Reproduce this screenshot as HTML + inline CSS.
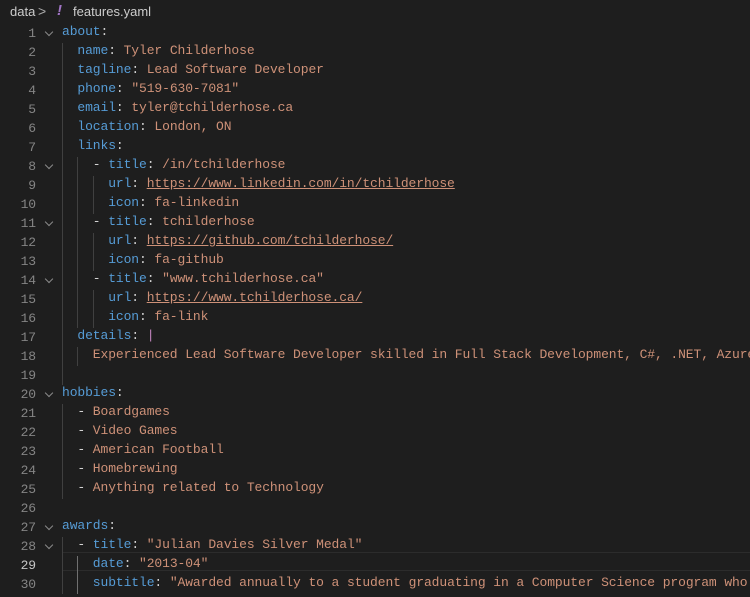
<!DOCTYPE html>
<html><head><meta charset="utf-8"><style>
html,body{margin:0;padding:0;background:#1e1e1e;width:750px;height:597px;overflow:hidden}
#bc{position:absolute;top:0;left:0;height:22px;width:750px;font:13px "Liberation Sans",sans-serif;color:#cccccc}
#bc span{position:absolute;top:4px}
#wrap{position:absolute;left:0;top:0;width:750px;height:597px;overflow:hidden}
.ln{position:absolute;left:0;width:36px;text-align:right;color:#858585;font:13px "Liberation Mono",monospace;letter-spacing:-0.1px}
.row{position:absolute;left:62px;width:688px;overflow:hidden;height:19px;line-height:19px;font:13px "Liberation Mono",monospace;letter-spacing:-0.1px;color:#d4d4d4;white-space:pre}
.g{position:absolute;top:0;width:1px;height:19px;background:#404040}
.k{color:#569cd6}.s{color:#ce9178}.u{color:#ce9178;text-decoration:underline}.p{color:#c586c0}
.cv{position:absolute;left:46px;width:5px;height:5px;border-right:1px solid #8a8a8a;border-bottom:1px solid #8a8a8a;transform:rotate(45deg)}
#cur{position:absolute;left:62px;width:700px;top:552px;height:17px;border:1px solid #2c2c2c}
</style></head><body>
<div id="bc"><span style="left:10px">data</span><span style="left:38px;top:3px;font-size:14px;color:#aaa">&gt;</span><span style="left:57px;top:2px;color:#a074c4;font-weight:bold;font-style:italic;font-size:15px">!</span><span style="left:73px">features.yaml</span></div>
<div id="wrap"><div id="cur"></div><div id="ed"></div></div>
<script>
const L=[
[0,'<span class="k">about</span>:'],
[2,'<span class="k">name</span>: <span class="s">Tyler Childerhose</span>'],
[2,'<span class="k">tagline</span>: <span class="s">Lead Software Developer</span>'],
[2,'<span class="k">phone</span>: <span class="s">"519-630-7081"</span>'],
[2,'<span class="k">email</span>: <span class="s">tyler@tchilderhose.ca</span>'],
[2,'<span class="k">location</span>: <span class="s">London, ON</span>'],
[2,'<span class="k">links</span>:'],
[4,'- <span class="k">title</span>: <span class="s">/in/tchilderhose</span>'],
[6,'<span class="k">url</span>: <span class="u">https://www.linkedin.com/in/tchilderhose</span>'],
[6,'<span class="k">icon</span>: <span class="s">fa-linkedin</span>'],
[4,'- <span class="k">title</span>: <span class="s">tchilderhose</span>'],
[6,'<span class="k">url</span>: <span class="u">https://github.com/tchilderhose/</span>'],
[6,'<span class="k">icon</span>: <span class="s">fa-github</span>'],
[4,'- <span class="k">title</span>: <span class="s">"www.tchilderhose.ca"</span>'],
[6,'<span class="k">url</span>: <span class="u">https://www.tchilderhose.ca/</span>'],
[6,'<span class="k">icon</span>: <span class="s">fa-link</span>'],
[2,'<span class="k">details</span>: <span class="p">|</span>'],
[4,'<span class="s">Experienced Lead Software Developer skilled in Full Stack Development, C#, .NET, Azure, and more</span>'],
[0,''],
[0,'<span class="k">hobbies</span>:'],
[2,'- <span class="s">Boardgames</span>'],
[2,'- <span class="s">Video Games</span>'],
[2,'- <span class="s">American Football</span>'],
[2,'- <span class="s">Homebrewing</span>'],
[2,'- <span class="s">Anything related to Technology</span>'],
[0,''],
[0,'<span class="k">awards</span>:'],
[2,'- <span class="k">title</span>: <span class="s">"Julian Davies Silver Medal"</span>'],
[4,'<span class="k">date</span>: <span class="s">"2013-04"</span>'],
[4,'<span class="k">subtitle</span>: <span class="s">"Awarded annually to a student graduating in a Computer Science program who has</span>']
];
const fold=[1,8,11,14,20,27,28];
let h='';const cw=7.7;
L.forEach((l,i)=>{const n=i+1,top=24+i*19;
let ind=l[0],txt=l[1];let gi=ind;if(i===18)gi=2;
h+=`<div class="ln" style="top:${top+2}px;${n==29?'color:#c6c6c6':''}">${n}</div>`;
if(fold.includes(n))h+=`<div class="cv" style="top:${top+5}px"></div>`;
let g='';for(let c=0;c<gi;c+=2){g+=`<div class="g" style="left:${Math.round(c*cw)}px;${(n>=29&&c==2)?'background:#707070':''}"></div>`;}
h+=`<div class="row" style="top:${top}px">${g}<span style="position:absolute;left:${ind*cw}px">${txt}</span></div>`;});
document.getElementById('ed').innerHTML=h;
</script>
</body></html>
